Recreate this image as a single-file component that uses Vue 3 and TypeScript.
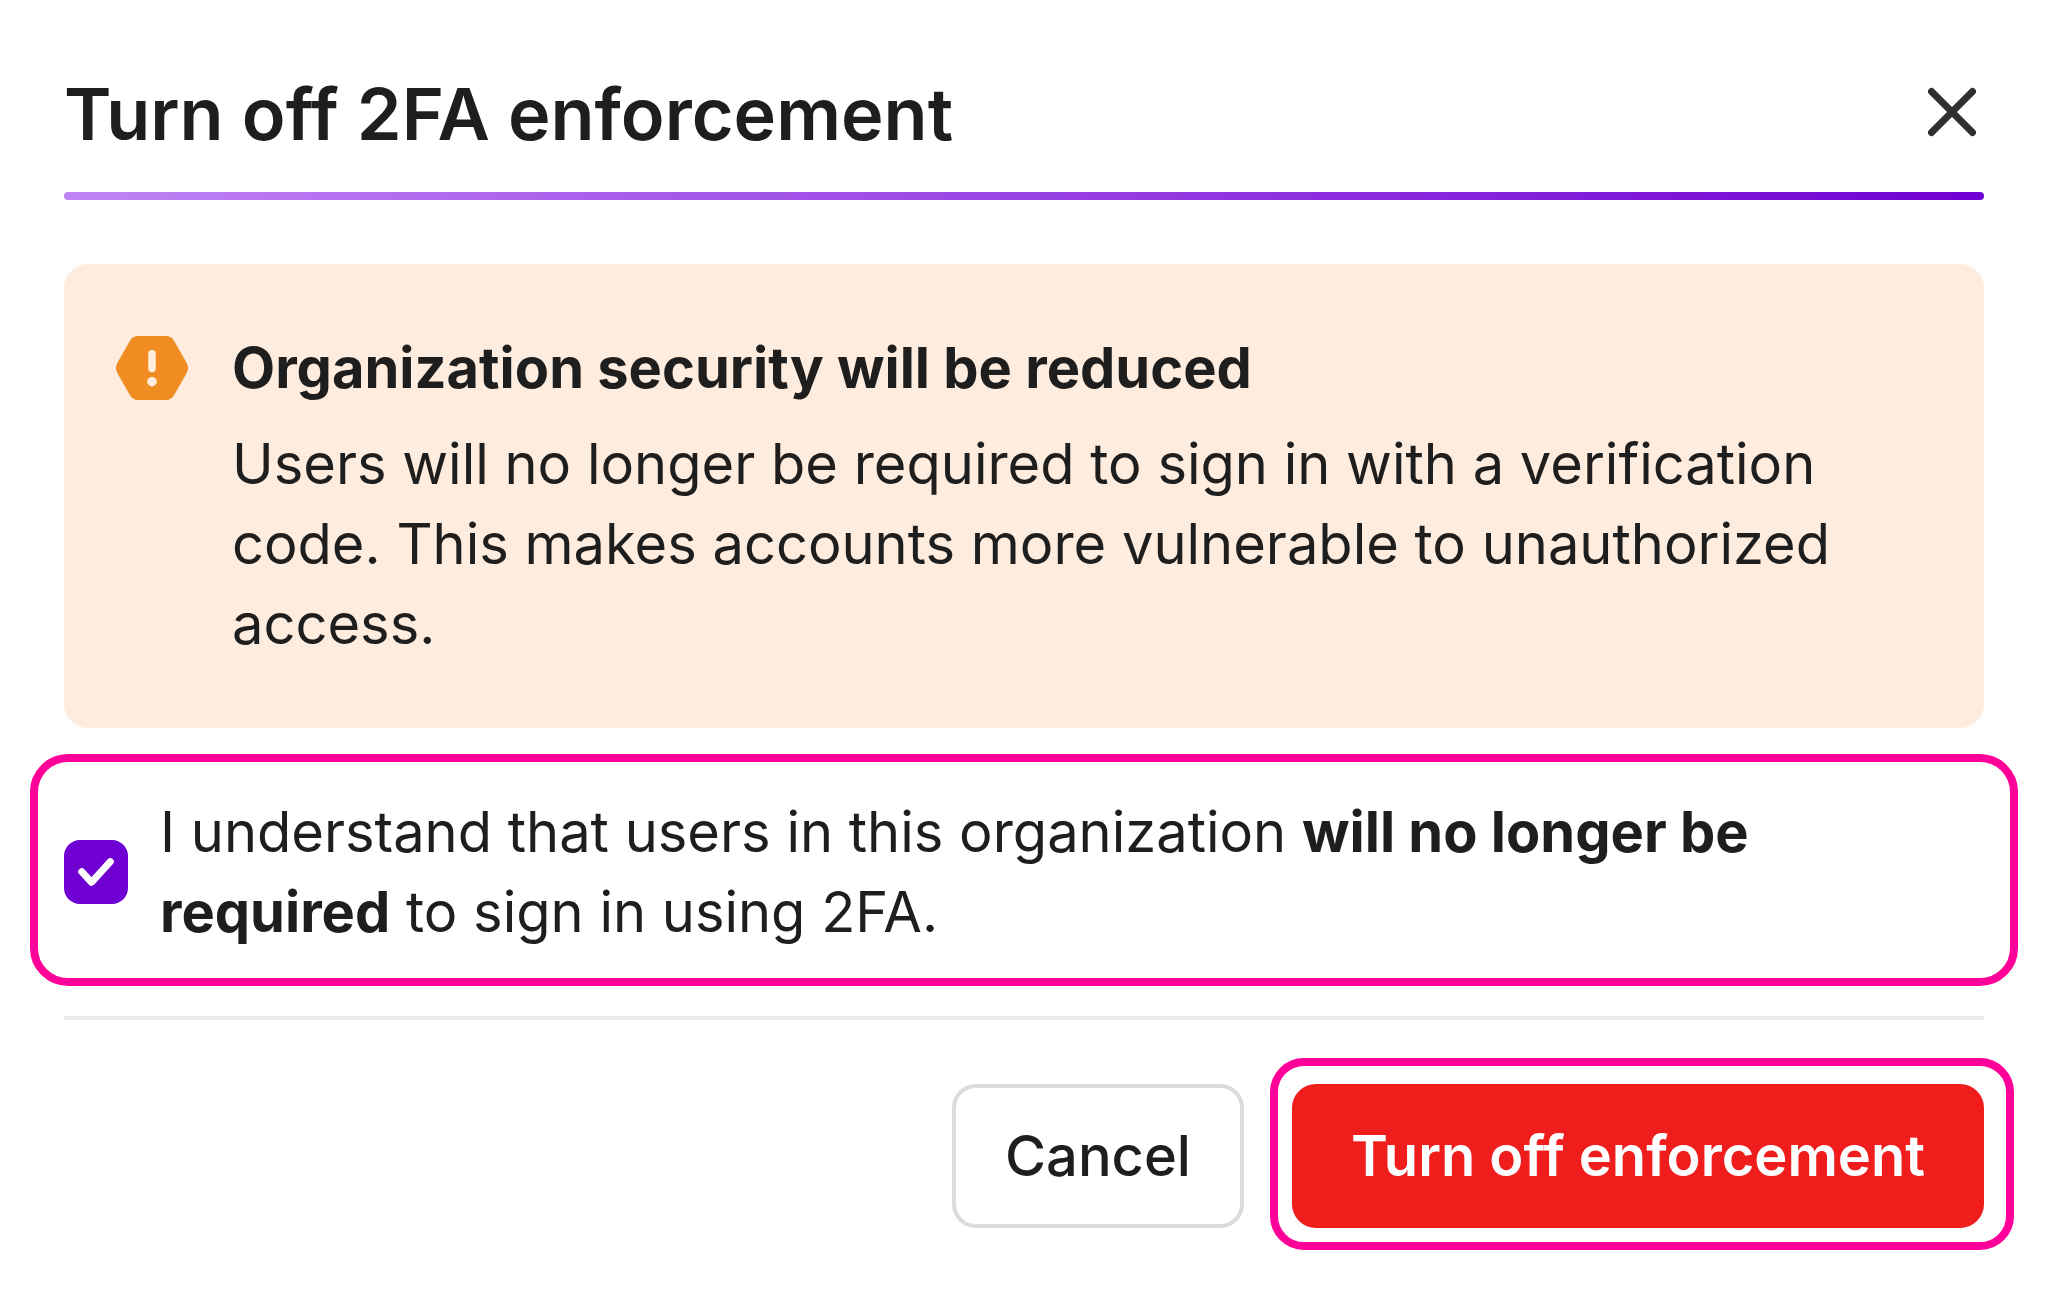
<script setup lang="ts">
import { ref } from 'vue'

const acknowledged = ref<boolean>(true)
</script>

<template>
  <main class="dialog" role="dialog" aria-labelledby="dialog-title">
    <header class="header">
      <h1 id="dialog-title" class="title">Turn off 2FA enforcement</h1>
      <button class="close" type="button" aria-label="Close">
        <svg viewBox="0 0 64 64" width="64" height="64" aria-hidden="true">
          <path d="M11.5 11.5 52.5 52.5M52.5 11.5 11.5 52.5" />
        </svg>
      </button>
    </header>
    <div class="accent"></div>

    <section class="warning">
      <svg class="warning-icon" viewBox="0 0 80 80" aria-hidden="true">
        <path class="hexagon" d="M14 40 26.500 18H53.500L66 40 53.500 62H26.500Z" />
        <path class="mark" d="M40 25.800V40.400" />
        <circle class="dot" cx="40" cy="53.700" r="4.800" />
      </svg>
      <div class="warning-body">
        <h2 class="warning-title">Organization security will be reduced</h2>
        <p class="warning-text">
          Users will no longer be required to sign in with a verification code. This makes accounts
          more vulnerable to unauthorized access.
        </p>
      </div>
    </section>

    <div class="consent highlight">
      <span class="checkbox">
        <input id="acknowledge" v-model="acknowledged" type="checkbox" />
        <svg v-if="acknowledged" viewBox="0 0 64 64" aria-hidden="true">
          <path d="M17.700 31.700 27.500 42.300 46.300 21.700" />
        </svg>
      </span>
      <label for="acknowledge">
        I understand that users in this organization <strong>will no longer be required</strong> to
        sign in using 2FA.
      </label>
    </div>

    <footer class="footer">
      <button class="button cancel" type="button">Cancel</button>
      <span class="confirm-wrap highlight">
        <button class="button confirm" type="button" :disabled="!acknowledged">
          Turn off enforcement
        </button>
      </span>
    </footer>
  </main>
</template>

<style>
body {
  margin: 0;
  background: #ffffff;
}
</style>

<style scoped>
.dialog {
  box-sizing: border-box;
  padding: 64px 68px 64px 64px;
  color: #1e1e1e;
  font-family: Inter, 'Liberation Sans', sans-serif;
  font-size: 56px;
  font-optical-sizing: none;
  line-height: 80px;
}

.header {
  display: flex;
  align-items: flex-start;
  justify-content: space-between;
}

.title {
  margin: 0;
  font-size: 72px;
  font-weight: 600;
  line-height: 100px;
}

.close {
  display: flex;
  align-items: center;
  justify-content: center;
  height: 96px;
  padding: 0;
  border: 0;
  background: none;
}

.close path {
  fill: none;
  stroke: #2f2f2f;
  stroke-width: 7;
  stroke-linecap: round;
}

.accent {
  height: 8px;
  margin-top: 28px;
  border-radius: 4px;
  background: linear-gradient(90deg, #c084f5, #7000d2);
}

.warning {
  display: flex;
  gap: 40px;
  margin-top: 64px;
  padding: 64px 48px;
  border-radius: 24px;
  background: #feecde;
}

.warning-icon {
  flex: none;
  width: 80px;
  height: 80px;
}

.hexagon {
  fill: #f08c22;
  stroke: #f08c22;
  stroke-width: 20;
  stroke-linejoin: round;
}

.mark {
  stroke: #feecde;
  stroke-width: 7.600;
  stroke-linecap: round;
}

.dot {
  fill: #feecde;
}

.warning-body {
  flex: 1;
}

.warning-title {
  margin: 0 0 16px;
  font-size: 56px;
  font-weight: 700;
}

.warning-text {
  margin: 0;
}

.highlight {
  position: relative;
}

.highlight::after {
  position: absolute;
  border: 8px solid #ff0099;
  content: '';
  pointer-events: none;
}

.consent {
  display: flex;
  align-items: center;
  gap: 32px;
  margin-top: 64px;
}

.consent::after {
  inset: -38px -34px -34px;
  border-radius: 38px;
}

.consent label {
  flex: 1;
}

.consent strong {
  font-weight: 700;
}

.checkbox {
  display: grid;
  flex: none;
  width: 64px;
  height: 64px;
}

.checkbox > * {
  grid-area: 1 / 1;
  width: 64px;
  height: 64px;
}

.checkbox input {
  box-sizing: border-box;
  margin: 0;
  border: 4px solid #d9dbdd;
  border-radius: 16px;
  appearance: none;
}

.checkbox input:checked {
  border-color: #7000d2;
  background: #7000d2;
}

.checkbox svg {
  pointer-events: none;
}

.checkbox path {
  fill: none;
  stroke: #ffffff;
  stroke-width: 7;
  stroke-linecap: round;
  stroke-linejoin: round;
}

.footer {
  display: flex;
  justify-content: flex-end;
  gap: 48px;
  margin-top: 64px;
  padding-top: 64px;
  border-top: 4px solid #ebebeb;
}

.button {
  display: block;
  box-sizing: border-box;
  padding: 28px 44px;
  border: 4px solid transparent;
  border-radius: 24px;
  color: inherit;
  font: inherit;
  font-optical-sizing: none;
}

.cancel {
  min-width: 292px;
  border-color: #d9dbdd;
  background: #ffffff;
  font-weight: 500;
}

.confirm {
  min-width: 692px;
  border-color: #f01d1d;
  background: #f01d1d;
  color: #ffffff;
  font-weight: 600;
}

.confirm-wrap::after {
  inset: -26px -30px -22px -22px;
  border-radius: 34px;
}
</style>
